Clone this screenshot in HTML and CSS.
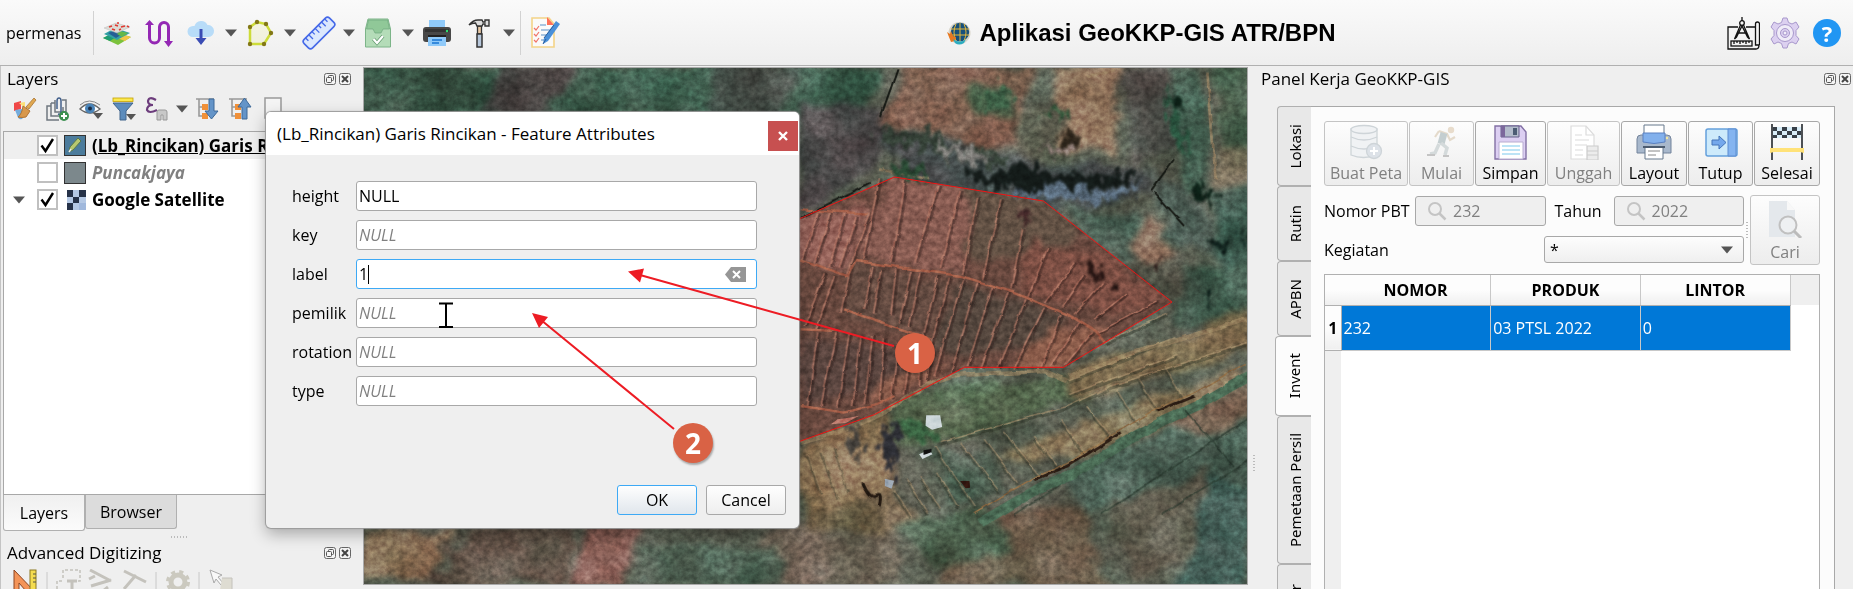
FILE: index.html
```html
<!DOCTYPE html>
<html lang="id">
<head>
<meta charset="utf-8">
<title>Aplikasi GeoKKP-GIS ATR/BPN</title>
<link rel="stylesheet" href="styles.css">
</head>
<body>
<svg class="defs" aria-hidden="true">
  <symbol id="restore" viewBox="0 0 12 12"><rect x=".5" y=".5" width="11" height="11" rx="2" fill="#f4f4f4" stroke="#666"/><rect x="4.500" y="2.500" width="5" height="5" rx="1" fill="none" stroke="#555"/><rect x="2.500" y="4.500" width="5" height="5" rx="1" fill="#f4f4f4" stroke="#555"/></symbol>
  <symbol id="closebox" viewBox="0 0 12 12"><rect x=".5" y=".5" width="11" height="11" rx="2" fill="#f4f4f4" stroke="#666"/><path d="M3 3l6 6M9 3l-6 6" stroke="#444" stroke-width="2"/></symbol>
  <symbol id="caret" viewBox="0 0 12 8"><path d="M0 0.500h12L6 7.500z" fill="#555"/></symbol>
  <symbol id="lens" viewBox="0 0 20 20"><circle cx="8" cy="8" r="6" fill="none" stroke="#c4c4c4" stroke-width="2"/><path d="M12.500 12.500l6 6" stroke="#c4c4c4" stroke-width="2.500"/></symbol>
</svg>

<header class="topbar">
  <span class="user">permenas</span>
  <div class="sep"></div>
  <nav class="tools">
    <button class="tool" aria-label="Layer"><svg width="30" height="24" viewBox="0 0 30 24"><path d="M1 17l12-6 16 5-13 8z" fill="#7cc23c"/><path d="M1 17l12-6 5 2-10 7z" fill="#1e9c74"/><path d="M19 13l10 3-6 4-8-3z" fill="#f0c648"/><path d="M2 13l11-6 15 5-13 7z" fill="#32a0a4"/><path d="M6 12l8-3 8 3-8 5z" fill="#245f96"/><path d="M18 10l8 2-6 4-5-3z" fill="#64b848"/><path d="M2 7l12-5 14 4-13 6z" fill="#dcdcd6" stroke="#bbb" stroke-width=".5"/><path d="M7 6l3-1M13 4l3 1M19 6l4-1M10 8l3 1M17 9l2-1M15 2l2 0M25 5l2 1" stroke="#e03a32" stroke-width="1.600"/></svg></button>
    <button class="tool" aria-label="Jalur"><svg width="28" height="28" viewBox="0 0 28 28"><path d="M4.500 3v16a5 5 0 0 0 10 0V8a4.500 4.500 0 0 1 9 0v16" fill="none" stroke="#9428b4" stroke-width="3"/><path d="M0 6l4.500-5L9 6zM19 22h9l-4.500 6z" fill="#9428b4"/></svg></button>
    <button class="tool" aria-label="Unduh"><svg width="28" height="26" viewBox="0 0 28 26"><path d="M6 17a5.500 5.500 0 0 1 0-11h1.500a7 7 0 0 1 13-1 6 6 0 0 1 1 12z" fill="#b8dcf8"/><path d="M12.500 9h3v9h4l-5.500 7-5.500-7h4z" fill="#3a4cb4"/></svg></button>
    <button class="drop" aria-label="Menu unduh"><svg width="12" height="8"><use href="#caret"/></svg></button>
    <button class="tool" aria-label="Poligon"><svg width="27" height="28" viewBox="0 0 27 28"><path d="M3 25V8l7-5 9 2 5 9-7 11z" fill="#eeeeb0" fill-opacity=".3" stroke="#cddc39" stroke-width="2.500"/><g fill="#827717"><circle cx="3" cy="25" r="2.200"/><circle cx="3" cy="8" r="2.200"/><circle cx="10" cy="3" r="2.200"/><circle cx="19" cy="5" r="2.200"/><circle cx="24" cy="14" r="2.200"/><circle cx="17" cy="25" r="2.200"/></g></svg></button>
    <button class="drop" aria-label="Menu poligon"><svg width="12" height="8"><use href="#caret"/></svg></button>
    <button class="tool" aria-label="Ukur"><svg width="34" height="34" viewBox="0 0 34 34"><g transform="rotate(-45 17 17)"><rect x="-1" y="11" width="36" height="12" rx="3" fill="#dce8fd" stroke="#4468e8" stroke-width="1.600"/><path d="M4 11v4M8.500 11v6M13 11v4M17.500 11v6M22 11v4M26.500 11v6M31 11v4" stroke="#4468e8" stroke-width="1.300"/></g></svg></button>
    <button class="drop" aria-label="Menu ukur"><svg width="12" height="8"><use href="#caret"/></svg></button>
    <button class="tool" aria-label="Validasi"><svg width="26" height="30" viewBox="0 0 26 30"><path d="M3 1h20l2.500 10v18H.5V11z" fill="#b4dcb8" stroke="#7cb488"/><path d="M3.500 2h19l2 9H18l-2 4h-6l-2-4H1.500z" fill="#90c898" stroke="#6ea87c" stroke-width=".7"/><path d="M8.500 21l3.500 4 6-7" fill="none" stroke="#5c9468" stroke-width="3.500"/><path d="M8.500 21l3.500 4 6-7" fill="none" stroke="#fff" stroke-width="2.300"/></svg></button>
    <button class="drop" aria-label="Menu validasi"><svg width="12" height="8"><use href="#caret"/></svg></button>
    <button class="tool" aria-label="Cetak"><svg width="28" height="28" viewBox="0 0 28 28"><path d="M6 1h16v10H6z" fill="#90caf9"/><rect x="0" y="8" width="28" height="15" rx="3" fill="#484848"/><path d="M2 10h24v3H2z" fill="#333"/><circle cx="24" cy="12" r="1.200" fill="#30e070"/><path d="M5 16h18v11H5z" fill="#90caf9"/><path d="M5 16h18v2H5z" fill="#222"/><path d="M9 21h10M9 24h7" stroke="#1976d2" stroke-width="1.500"/></svg></button>
    <button class="tool" aria-label="Alat"><svg width="22" height="30" viewBox="0 0 22 30"><path d="M9.500 8h4v8h-4z" fill="#e8c8a4" stroke="#333" stroke-width="1.300"/><path d="M9 16h5v13H9z" fill="#b8c8dc" stroke="#333" stroke-width="1.500"/><path d="M1 7q4-5 9-5h4l1 2h2V2h4v6h-4V6h-2l-1 2H9L7.500 5Q4 5 1 7z" fill="#ddd" stroke="#333" stroke-width="1.400"/></svg></button>
    <button class="drop" aria-label="Menu alat"><svg width="12" height="8"><use href="#caret"/></svg></button>
    <div class="sep inner"></div>
    <button class="tool" aria-label="Formulir"><svg width="30" height="32" viewBox="0 0 30 32"><path d="M1 1h17l5 6v23H1z" fill="#fafafa" stroke="#f4d488" stroke-width="1.600"/><path d="M16 0l7 8h-7z" fill="#ff7058"/><path d="M3 11l2 2 3-4M3 17l2 2 3-4M3 23l2 2 3-4" fill="none" stroke="#f07468" stroke-width="1.200"/><path d="M9 8h6M10 13h9M10 18h6M10 23h4" stroke="#90b4d8" stroke-width="1.500"/><path d="M25 4l4 3-12 17-5 3 1-6z" fill="#4a90d9"/><path d="M13 21l10-13M12 27l3-5" stroke="#2c5f9c"/></svg></button>
  </nav>
  <h1 class="brand">
    <svg width="24" height="24" viewBox="0 0 24 24"><circle cx="12.500" cy="12" r="11" fill="#d8d4c8"/><circle cx="13" cy="11" r="9.200" fill="#17507c"/><path d="M4 8h18M4 14h18M13 2v18M9 3q-4 8 0 17M17 3q4 8 0 17" fill="none" stroke="#e8b838"/><path d="M0 11l3 2 1-3 2 5 3 1-1 4-4 1z" fill="#e87820"/><path d="M6 18q7 5 13 0l-2 4q-5 3-9 0z" fill="#2cacc0"/></svg>
    <span>Aplikasi GeoKKP-GIS ATR/BPN</span>
  </h1>
  <div class="tools right">
    <button class="tool" aria-label="Gambar"><svg width="33" height="34" viewBox="0 0 33 34" fill="none" stroke="#111" stroke-width="1.300"><path d="M11 11H1v22h28q3 0 3-4H28.500V8q0-2 2-2t2 2v21M19 11h9.500"/><rect x="4" y="25" width="21" height="5"/><path d="M7 25v3M10 25v2M13 25v3M16 25v2M19 25v3M22 25v2M15 1v4"/><circle cx="15" cy="7" r="2.300"/><path d="M13.500 9L7.500 23l2-2 5.500-11 5.500 11 2 2-6-14M11.500 17h7"/></svg></button>
    <button class="tool" aria-label="Pengaturan"><svg width="30" height="32" viewBox="0 0 30 32"><path d="M13 1h4l1.500 4.500 3.500 1.500 4-2 3 5-3 3.500v5l3 3.500-3 5-4-2-3.500 1.500L17 31h-4l-1.500-4.500L8 25l-4 2-3-5 3-3.500v-5L1 10l3-5 4 2 3.500-1.500z" fill="#dcd0f0" stroke="#a898cc"/><circle cx="15" cy="16" r="8.500" fill="#f0ecf8" stroke="#a898cc"/><circle cx="15" cy="16" r="4.500" fill="#dcd0f0" stroke="#a898cc"/><circle cx="15" cy="16" r="2" fill="#f4f0fa" stroke="#a898cc"/></svg></button>
    <button class="tool help" aria-label="Bantuan"><span>?</span></button>
  </div>
</header>

<main class="work">
  <aside class="left">
    <div class="dockhead"><h2>Layers</h2><span class="dockbtns"><svg width="12" height="12"><use href="#restore"/></svg><svg width="12" height="12"><use href="#closebox"/></svg></span></div>
    <div class="layerbar">
      <button class="ltool" aria-label="Gaya"><svg width="24" height="24" viewBox="0 0 24 24"><path d="M1 6l7-2v8l-7 2z" fill="#f04848"/><path d="M6 6l6-1v6z" fill="#fce078"/><path d="M2 13l7-1 5 4-5 6q-4 1-5-4z" fill="#74acdc"/><path d="M21 1l2 2-7 9-3-2z" fill="#e0a850" stroke="#a87434" stroke-width=".8"/><path d="M10 9l7 5-4 6q-4 1-8 0 4-3 5-11z" fill="#d8984c" stroke="#b07434"/></svg></button>
      <button class="ltool" aria-label="Tambah grup"><svg width="24" height="24" viewBox="0 0 24 24" fill="none" stroke="#707880" stroke-width="1.500"><path d="M5 9H1v14h12M5 6h4M5 6v13h12V10M9 3v12h11V3h-4"/><path d="M11 12V4q0-3 2-3t2 3v10q0 4-3 3" stroke="#44618c"/><circle cx="18" cy="19" r="5" fill="#3c9050" stroke="none"/><path d="M18 16v6M15 19h6" stroke="#fff" stroke-width="2"/></svg></button>
      <button class="ltool" aria-label="Tampilan"><svg width="26" height="24" viewBox="0 0 26 24"><path d="M2 12Q11 2 22 12 12 20 2 12z" fill="#fff" stroke="#666" stroke-width="1.400"/><path d="M2 8Q11 0 22 8" fill="none" stroke="#888"/><circle cx="12" cy="11.500" r="5" fill="#4a84b8"/><circle cx="12" cy="11.500" r="2" fill="#1c2c44"/><path d="M15 16h10l-5 6z" fill="#555"/></svg></button>
      <button class="ltool" aria-label="Filter"><svg width="24" height="24" viewBox="0 0 24 24"><path d="M1 6h20l-7 8v9H8v-9z" fill="#5c8cbc" stroke="#40648c"/><rect x="1" y="1" width="20" height="3.500" fill="#fce94f" stroke="#c4a000" stroke-width=".8"/><path d="M14 17h10l-5 6z" fill="#555"/></svg></button>
      <button class="ltool" aria-label="Ekspresi"><svg width="24" height="24" viewBox="0 0 24 24" fill="none"><path d="M11 3Q4-1 3 4q0 4 5 4-6 0-6 5 2 4 10 0" stroke="#6c3c7c" stroke-width="2.200"/><path d="M12 23v-8q0-2 2-2h6q2 0 2 2v8h-4v-5h-2v5z" fill="#c8c8c8" stroke="#999"/></svg></button>
      <button class="drop" aria-label="Menu ekspresi"><svg width="12" height="8"><use href="#caret"/></svg></button>
      <button class="ltool" aria-label="Buka semua"><svg width="24" height="24" viewBox="0 0 24 24"><path d="M1 2h18M4 2v17h5M4 10h5" fill="none" stroke="#999" stroke-width="1.600"/><path d="M7 7h6v6H7zM7 16h6v6H7z" fill="#f09038"/><path d="M14 2h5v12h4l-6.500 8L10 14h4z" fill="#6494c8" stroke="#3c6898"/></svg></button>
      <button class="ltool" aria-label="Tutup semua"><svg width="24" height="24" viewBox="0 0 24 24"><path d="M1 2h18M4 2v17h5M4 10h5" fill="none" stroke="#999" stroke-width="1.600"/><path d="M7 7h6v6H7zM7 16h6v6H7z" fill="#f09038"/><path d="M14 22h5V10h4L16.500 1 10 10h4z" fill="#6494c8" stroke="#3c6898"/></svg></button>
      <button class="ltool" aria-label="Hapus"><svg width="18" height="24" viewBox="0 0 18 24"><rect x="1" y="1" width="16" height="20" fill="#f4f4f4" stroke="#999" stroke-width="1.500"/></svg></button>
    </div>
    <ul class="tree">
      <li class="layer current"><label><input type="checkbox" checked><svg width="22" height="21" viewBox="0 0 22 21"><rect x=".5" y=".5" width="21" height="20" fill="#4c7c9c" stroke="#333"/><path d="M5 17l1-5 8-9 3 3-8 9z" fill="#b8c870" stroke="#587848"/><path d="M5 17l2-3" stroke="#eee" stroke-width="1.500"/></svg><b class="under">(Lb_Rincikan) Garis R</b></label></li>
      <li class="layer"><label><input type="checkbox"><svg width="22" height="22"><rect x=".5" y=".5" width="21" height="21" fill="#7c888c" stroke="#333"/></svg><b class="off">Puncakjaya</b></label></li>
      <li class="layer"><svg class="expand" width="12" height="8"><use href="#caret"/></svg><label><input type="checkbox" checked><svg width="22" height="20" viewBox="0 0 22 20"><path d="M3 0h19v20H3z" fill="#b4c8e4"/><path d="M3 0h6v7H3zM15 0h7v7h-7zM9 7h6v6H9zM3 13h6v7H3z" fill="#263248"/><path d="M15 13h7v7h-7z" fill="#a0b8dc"/></svg><b>Google Satellite</b></label></li>
    </ul>
    <div class="docktabs"><button class="dtab on">Layers</button><button class="dtab">Browser</button></div>
    <div class="hgrip"></div>
    <div class="dockhead"><h2>Advanced Digitizing</h2><span class="dockbtns"><svg width="12" height="12"><use href="#restore"/></svg><svg width="12" height="12"><use href="#closebox"/></svg></span></div>
    <svg class="digit" width="300" height="20"><path d="M1 1l22 23H1z" fill="#f49458" stroke="#8c4420"/><path d="M6 14l7 8H6z" fill="#efefef" stroke="#8c4420"/><rect x="17" y="1" width="6" height="24" fill="#f4dc50" stroke="#8c7820"/><path d="M20 5h3M20 9h3M20 13h3" stroke="#554"/><path d="M34 3v22M143 3v22M186 3v22" stroke="#c8c8c8"/><g fill="none" stroke="#c4c2bc" stroke-width="1.500"><path d="M50 9V1h17v11h-8M44 20v-8h6" stroke-dasharray="3 2"/><path d="M54 12h10M59 12v12" stroke-width="3"/><path d="M77 1l21 11M78 17l20-6M76 10l6-3M90 22l5-4M111 2l22 11M111 20l12-14" stroke-width="3"/></g><circle cx="165" cy="13" r="7" fill="none" stroke="#cbc9bf" stroke-width="5"/><circle cx="165" cy="13" r="10" fill="none" stroke="#cbc9bf" stroke-width="4" stroke-dasharray="4 4"/><path d="M197 1l12 5-4 2 5 6-2 2-5-6-2 4z" fill="#f8f8f8" stroke="#aaa"/><path d="M209 9h10v12h-12" fill="#dedcd2" stroke="#c4c2bc"/></svg>
  </aside>

  <section class="map" aria-label="Peta">
    <svg class="sat" viewBox="5 8 1540 1548" preserveAspectRatio="none">
      <defs>
        <filter id="b1" x="-10%" y="-10%" width="120%" height="120%" color-interpolation-filters="sRGB"><feTurbulence type="fractalNoise" baseFrequency=".012 .007" numOctaves="4" seed="4" result="n"/><feDisplacementMap in="SourceGraphic" in2="n" scale="80" xChannelSelector="R" yChannelSelector="G" result="d"/><feGaussianBlur in="d" stdDeviation="6 10"/></filter>
        <filter id="b2" x="-10%" y="-10%" width="120%" height="120%" color-interpolation-filters="sRGB"><feTurbulence type="fractalNoise" baseFrequency=".04 .024" numOctaves="4" seed="4" result="n"/><feDisplacementMap in="SourceGraphic" in2="n" scale="90" xChannelSelector="R" yChannelSelector="G" result="d"/><feGaussianBlur in="d" stdDeviation="3 5"/></filter>
        <filter id="rough" x="-5%" y="-5%" width="110%" height="110%" color-interpolation-filters="sRGB"><feTurbulence type="fractalNoise" baseFrequency=".015 .015" numOctaves="3" seed="8" result="n"/><feDisplacementMap in="SourceGraphic" in2="n" scale="14" xChannelSelector="R" yChannelSelector="G" result="d"/><feGaussianBlur in="d" stdDeviation="1"/></filter>
        <filter id="grain" x="0" y="0" width="100%" height="100%" color-interpolation-filters="sRGB"><feTurbulence type="fractalNoise" baseFrequency=".09 .055" numOctaves="4" seed="11"/><feColorMatrix values="1.200 0 0 0 -.1 1.200 0 0 0 -.1 1.200 0 0 0 -.1 0 0 0 0 1"/></filter>
        <filter id="cloud" x="0" y="0" width="100%" height="100%" color-interpolation-filters="sRGB"><feTurbulence type="fractalNoise" baseFrequency=".011 .007" numOctaves="5" seed="23"/><feColorMatrix values="1.600 .4 0 0 -.5 1.600 -.1 0 0 -.25 1.600 0 0 0 -.3 0 0 0 0 1"/></filter>
        <clipPath id="lot"><path d="M600 580L765 460 930 335l260 72 224 303-189 196h-173L895 1048l-130 80-165 100z"/></clipPath>
        <path id="strips" d="M235 340L185 580M310 345L270 590M410 360L345 590M475 375L415 610M530 395L485 625M600 400L545 640M665 490L630 670M740 545L680 695M820 590L735 710M850 625L785 725M905 650L820 745M975 685L880 760M1070 705L890 800M70 625L10 780M100 630L45 790M150 600L120 740M215 600L190 730M240 610L215 740M285 610L270 745M330 615L295 770M360 620L325 780M410 630L370 800M445 635L395 820M485 640L400 930M530 650L450 920M575 660L500 900M625 680L540 905M675 700L590 905M730 725L640 905M780 745L720 905M835 770L750 900M875 800L790 900M50 800L20 1020M105 800L60 1020M145 800L110 1025M180 810L155 1020M215 810L190 1015M250 820L235 1010M290 850L270 1000M330 850L310 985M365 800L355 960M395 820L375 950M50 440L5 580M90 440L40 590M130 440L85 600M165 450L115 605M205 440L135 630"/>
        <path id="plots" d="M480 1130L590 1270M550 1120L650 1250M610 1100L720 1230M700 1110L770 1200M780 1060L850 1160M860 1020L930 1110M950 970L1010 1070M1010 930L1070 1030M1090 900L1150 1000M20 1160L60 1280M60 1150L110 1290M100 1140L140 1270M280 1270L330 1350M320 1240L380 1340M360 1230L420 1330M410 1220L470 1320M400 1140L520 1320M805 940L1120 815M805 985L1130 865M915 830L1100 740M420 1130L800 1020 930 960 1340 830"/>
      </defs>
      <rect x="5" y="8" width="1540" height="1548" fill="#5a5f52"/>
      <g filter="url(#b1)">
        <path d="M0 0h900l-60 180H0z" fill="#3a5747"/><path d="M240 0h140l-60 150H200z" fill="#4a4644"/><path d="M620 0h160l-60 160h-100z" fill="#434e47"/><path d="M780 120h130v120l-30 100-120 110z" fill="#4d4a4a"/>
        <path d="M950 0h220l-20 220-100 20-150-60z" fill="#7c5c4c"/><path d="M1070 60h70v90h-70z" fill="#4b5f48"/><path d="M1150 130l110 0-30 170-120-20z" fill="#5c5f50"/><path d="M1210 10h130l-30 270-80-30z" fill="#967a62"/><path d="M1340 0h60l30 260-90 40z" fill="#504f4a"/><path d="M1400 0h60l30 420-50-60z" fill="#435f50"/><path d="M1490 0h80v260h-70z" fill="#4a604d"/><path d="M1490 260h80v100h-70z" fill="#78735d"/><path d="M1480 360h80v300h-60z" fill="#3f5c50"/>
        <path d="M900 200l260 80 200 30 40 70-200 60-240-90z" fill="#454c4c"/><path d="M1200 410l150 40 20 100-30 70z" fill="#4f6458"/><path d="M1330 530l45-80 60 110-50 40z" fill="#8a6a58"/><path d="M1360 290l80 60 60 220-90-60z" fill="#505d55"/>
        <path d="M1420 600h140v130l-140 50z" fill="#445c4e"/><path d="M940 990l290-60 60 60-250 130-110 20z" fill="#56694f"/><path d="M765 1130l160-80v270l-160 90z" fill="#8f7658"/>
        <path d="M1230 930l320-200v130l-320 150z" fill="#837355"/><path d="M1100 1180l260-170 150-90 20 50-250 200z" fill="#877658"/><path d="M980 1150h110l40 140-100 30z" fill="#4d5e50"/><path d="M920 1280l80 100-220 60v-80z" fill="#78674f"/><path d="M1220 1230l330-260v300l-300 80z" fill="#4f6458"/><path d="M1400 1070l150-100v90l-100 60z" fill="#786352"/>
        <path d="M1050 1380l200-60 60 240h-300z" fill="#6a5b49"/><path d="M1300 1320l180-100 20 200-160 140z" fill="#5f5c4e"/><path d="M1480 1250h80v320h-140z" fill="#405d55"/><path d="M940 1380l140-40 40 100-120 80z" fill="#4b604c"/><path d="M700 1400h240v160H680z" fill="#6d6355"/><path d="M5 1390h170l-50 160H5z" fill="#8e745a"/><path d="M180 1390h200l-30 170H130z" fill="#5f5045"/><path d="M400 1380h80l-50 180h-70z" fill="#865c53"/><path d="M480 1440h260v120H450z" fill="#4a5b4d"/>
      </g>
      <rect x="5" y="8" width="1540" height="1548" filter="url(#cloud)" class="soft"/>
      <g clip-path="url(#lot)">
        <path d="M600 300h900v900H600z" fill="#69493f"/>
        <g filter="url(#b1)">
          <path d="M920 310l150 40-20 270-180-40z" fill="#885c52"/><path d="M740 430l150 0-30 210-110-50z" fill="#96635a"/><path d="M1060 370l130 17 60 110-60 100-130-20z" fill="#625144"/><path d="M1150 510l140 60 130 130-60 50-200-70z" fill="#7b4e43"/>
          <path d="M860 600l180 40-40 170-160-60z" fill="#654c42"/><path d="M1040 650l180 90-60 120h-160z" fill="#55473e"/><path d="M765 820l230 40-20 80-210 70z" fill="#5a453f"/><path d="M1180 780l110 20-70 120h-80z" fill="#8c5d4b"/><path d="M900 960l120-60-90 110-80 20z" fill="#8a5c4b"/>
        </g>
      </g>
      <g transform="translate(767 2) scale(.581 1)" fill="none">
        <g filter="url(#rough)">
          <use href="#strips" x="7" stroke="#2c1a18" stroke-width="8" opacity=".45"/><use href="#strips" stroke="#c07e69" stroke-width="4" opacity=".75"/>
          <path d="M0 580L140 630 165 585 480 630 640 680 800 745 885 795 915 830M0 1020l130 20 90-20 60-30M0 430l70 5 130 8M130 730l260 90M0 790l110 5" stroke="#a55f49" stroke-width="7"/>
          <use href="#plots" y="8" stroke="#2e3327" stroke-width="8" opacity=".42"/><use href="#plots" stroke="#b39872" stroke-width="4" opacity=".55"/>
          <path d="M0 1130q200-50 310-130t200-75l220-10 70 30M805 930L1000 860 1340 760" stroke="#a48a66" stroke-width="14" opacity=".6"/>
          <path d="M520 1345L700 1240 800 1200 960 1100 1070 1040 1180 990 1335 900" stroke="#4a6a54" stroke-width="30" transform="translate(20 24)"/>
          <path d="M700 1242L800 1200 960 1102M1070 1036L1180 990" stroke="#2c1d14" stroke-width="8"/><path d="M520 1340L700 1235 800 1192 960 1092 1070 1028 1180 980 1335 892" stroke="#8c6a44" stroke-width="4"/>
          <path d="M1220 20l25 320M860 30l80-15M235 310l150 30" stroke="#9c8464" stroke-width="8" opacity=".7"/><path d="M1050 375l70-95M1060 380l90 100M210 350L0 455M240 150l50-140" stroke="#171a15" stroke-width="6"/>
          <path d="M185 1250q20 50 40 40t10 30" stroke="#241a12" stroke-width="9"/><path d="M900 1345L1340 1060M1080 1345l260-160M640 1345l140-90M1150 1030l150 170" stroke="#25332a" stroke-width="5" opacity=".6"/>
        </g>
        <g filter="url(#b2)">
          <path d="M230 190l160 10 90 35 110 25 30 40-150-15-150-50-90-10z" fill="#333f35"/><path d="M250 290l120 20 20 30-140-20z" fill="#2a4a34"/>
          <path d="M510 310l60 10 90-30 100 30 90 10 120-10 40 20-70 20-110 20-60 15-100-20-90-5-80-30z" fill="#141b19"/><path d="M780 200l70 10-30 50-30-20z" fill="#2c241a"/>
          <path d="M400 230l100 10 80 40-70 10-90-30z" fill="#82807c"/><path d="M640 370l60 10 80-20 110 15 140-25-50 40-110 25-100-20-110 5z" fill="#5d7082"/><path d="M720 240l110 10-40 30z" fill="#98857f"/>
          <path d="M1110 90l40 10-10 40-30-10zM1100 170l50 0-20 40zM1180 350l50 30 10 40-60-30z" fill="#0c1f16"/><path d="M1090 60l50 120 30 100-60-80z" fill="#29533e"/>
          <path d="M850 590l50 10 10 40-40 10zM925 635l40 20-20 30zM1060 585l30-5-30 40z" fill="#231311"/><path d="M640 430l60 0-30 40z" fill="#45292a"/><path d="M1240 520h50v30h-40zM1310 500h40v40zM1200 680h30v40z" fill="#0c1c18"/>
          <path d="M240 1080h60l-10 60-20 120-25-90z" fill="#2d2e34"/><path d="M130 1070l50 0 0 90-30 20z" fill="#45413c"/><path d="M290 1060l90 10 30 60-80-10z" fill="#3a6342"/><path d="M540 90l70-40 30 60-60 30z" fill="#3b5d44"/><path d="M730 130l70 0-20 40z" fill="#31563a"/>
        </g>
        <path d="M376 1048h42l6 35-30 8-20-12zM355 1165l30-14 10 14-30 14z" fill="#ccd6d9"/><path d="M252 1238l28 6-8 24-20-8z" fill="#9ea9b5"/><path d="M368 1153l24-4v10l-24 8z" fill="#111"/><path d="M478 1245l28 0 2 20-14 2z" fill="#32160f"/><path d="M90 1075l20-15 35-5 30-6-40 22z" fill="#c07f70"/>
      </g>
      <rect x="5" y="8" width="1540" height="1548" filter="url(#grain)" class="over"/>
      <path d="M600 580L765 460 930 335l260 72 224 303-189 196h-173L895 1048l-130 80-165 100z" fill="none" stroke="#f21414" vector-effect="non-scaling-stroke"/>
    </svg>
  </section>

  <aside class="right">
    <div class="dockhead"><h2>Panel Kerja GeoKKP-GIS</h2><span class="dockbtns"><svg width="12" height="12"><use href="#restore"/></svg><svg width="12" height="12"><use href="#closebox"/></svg></span></div>
    <div class="vgrip"></div>
    <div class="tabbed">
      <div class="vtabs">
        <button class="vtab t1"><span>Lokasi</span></button>
        <button class="vtab t2"><span>Rutin</span></button>
        <button class="vtab t2"><span>APBN</span></button>
        <button class="vtab t1 on"><span>Invent</span></button>
        <button class="vtab t3"><span>Pemetaan Persil</span></button>
        <button class="vtab t4"><span>r</span></button>
      </div>
      <div class="pane">
        <div class="actions">
          <button class="act" disabled><svg width="34" height="36" viewBox="0 0 34 36" fill="#f0f2f4" stroke="#ced4d8" stroke-width="1.300"><path d="M2 5v26q12 5 26 0V5z"/><ellipse cx="15" cy="5.500" rx="13" ry="4"/><path d="M2 13q13 6 26 0M2 22q13 6 26 0" fill="none"/><circle cx="25" cy="27" r="7.500" fill="#dde2e8"/><path d="M25 23v8M21 27h8" stroke="#fff" stroke-width="2"/></svg>Buat Peta</button>
          <button class="act" disabled><svg width="34" height="36" viewBox="0 0 34 36" fill="none"><circle cx="26" cy="6" r="3.200" fill="#e8dccc"/><path d="M14 7l8 3 3 6 5-3M14 7l-4 6" stroke="#e4dacb" stroke-width="2.200"/><path d="M19 9l-3 11" stroke="#c4ced0" stroke-width="7"/><path d="M16 19l6 5-2 7M14 20l-4 9-5 1" stroke="#d4dadb" stroke-width="3.500"/><path d="M2 31h8M18 32h6" stroke="#c4c4c4" stroke-width="2"/></svg>Mulai</button>
          <button class="act"><svg width="34" height="36" viewBox="0 0 34 36"><path d="M1 2h26l5 6v27H1z" fill="#dccff2" stroke="#8270a4" stroke-width="1.400"/><path d="M7 2h18v11H7z" fill="#b4bccc" stroke="#66608c"/><path d="M7 2h4v11H7z" fill="#7c689c"/><path d="M19 4h4v7h-4z" fill="#4c5c74"/><path d="M5 18h24v17H5z" fill="#fff" stroke="#b8acd0"/><path d="M8 22h18M8 26h18M8 30h18" stroke="#a8dcf4" stroke-width="1.500"/></svg>Simpan</button>
          <button class="act" disabled><svg width="34" height="36" viewBox="0 0 34 36" fill="#fff" stroke="#dcdcdc" stroke-width="1.200"><path d="M4 2h15l8 9v24H4z"/><path d="M19 2v9h8M8 11h7M8 16h14M8 21h12M8 26h8M8 31h8" fill="none"/><path d="M20 22h11v14H20zM20 27h11M20 31h11" fill="#ececec" stroke="#ccc"/></svg>Unggah</button>
          <button class="act"><svg width="36" height="36" viewBox="0 0 36 36"><path d="M8 1h20v10H8z" fill="#fff" stroke="#66788c"/><path d="M5 11h26q4 0 4 4v14H1V15q0-4 4-4z" fill="#a8b8cc" stroke="#73839b"/><path d="M7 9h22v9q-11 3-22 0z" fill="#82b0ec" stroke="#5a80c0"/><path d="M9 23h18v12H9z" fill="#fff" stroke="#66788c"/><path d="M7 23h22" stroke="#4c5c70" stroke-width="2"/><path d="M12 27h12M12 31h8" stroke="#888"/><circle cx="31" cy="14" r="1.200" fill="#f4e8a0"/></svg>Layout</button>
          <button class="act"><svg width="34" height="36" viewBox="0 0 34 36"><rect x="2" y="5" width="31" height="27" rx="2" fill="#cdeafb" stroke="#64a0dc" stroke-width="1.500"/><path d="M24 5h8v27h-8z" fill="#84b4f0" stroke="#5c8cd0"/><path d="M8 16h7v-4l7 6.500-7 6.500v-4H8z" fill="#74a8ec" stroke="#4474b8"/></svg>Tutup</button>
          <button class="act"><svg width="34" height="36" viewBox="0 0 34 36"><path d="M2 3h30v11H2z" fill="#d8edf8"/><path d="M2 3h5v4H2zM12 3h5v4h-5zM22 3h5v4h-5zM7 7h5v4H7zM17 7h5v4h-5zM27 7h5v4h-5zM2 11h5v3H2zM12 11h5v3h-5zM22 11h5v3h-5z" fill="#384048"/><path d="M2 0v36M32 0v36" stroke="#4c5054" stroke-width="2"/><path d="M0 24h34v5l-4-1H4l-4 1z" fill="#ffe278"/></svg>Selesai</button>
        </div>
        <div class="search">
          <div class="fields">
            <label for="pbt">Nomor PBT</label>
            <span class="lensbox"><svg width="20" height="20"><use href="#lens"/></svg><input id="pbt" value="232" disabled></span>
            <label for="tahun" class="mid">Tahun</label>
            <span class="lensbox"><svg width="20" height="20"><use href="#lens"/></svg><input id="tahun" value="2022" disabled></span>
            <label for="keg" class="keg">Kegiatan</label>
            <span class="combo"><select id="keg"><option>*</option></select><svg width="12" height="8"><use href="#caret"/></svg></span>
          </div>
          <div class="vdots"></div>
          <button class="act cari" disabled><svg width="36" height="38" viewBox="0 0 36 38"><path d="M2 1h18l8 9v27H2z" fill="#e4e8ec"/><path d="M20 1v9h8z" fill="#f8f8f8"/><circle cx="21" cy="25" r="8.500" fill="#eef0f2" stroke="#c0c0c0" stroke-width="2"/><path d="M27 31l7 7" stroke="#bbb" stroke-width="3"/></svg>Cari</button>
        </div>
        <div class="gridview">
          <table>
            <thead><tr><th class="num"></th><th>NOMOR</th><th>PRODUK</th><th>LINTOR</th><th class="rest"></th></tr></thead>
            <tbody><tr><th class="num">1</th><td>232</td><td>03 PTSL 2022</td><td>0</td><td class="rest"></td></tr></tbody>
          </table>
          <div class="gutter"></div>
        </div>
      </div>
    </div>
  </aside>
</main>

<form class="dialog">
  <div class="dtitle"><h2>(Lb_Rincikan) Garis Rincikan - Feature Attributes</h2><button type="button" class="close" aria-label="Tutup dialog"><svg width="10" height="10"><path d="M1 1l8 8M9 1l-8 8" stroke="#fff" stroke-width="2.400"/></svg></button></div>
  <div class="attrs">
    <label for="f1">height</label><input id="f1" value="NULL">
    <label for="f2">key</label><input id="f2" placeholder="NULL">
    <label for="f3">label</label><span class="clearable"><input id="f3" class="focus" value="1"><i class="textcaret"></i><svg width="21" height="15" viewBox="0 0 21 15"><path d="M6 0h15v15H6L0 7.500z" fill="#969696"/><path d="M8 4l7 7M15 4l-7 7" stroke="#fff" stroke-width="2"/></svg></span>
    <label for="f4">pemilik</label><input id="f4" placeholder="NULL">
    <label for="f5">rotation</label><input id="f5" placeholder="NULL">
    <label for="f6">type</label><input id="f6" placeholder="NULL">
  </div>
  <div class="dbtns"><button type="button" class="ok">OK</button><button type="button">Cancel</button></div>
</form>

<div class="notes">
  <svg width="940" height="589" viewBox="0 0 940 589"><g stroke="#ed1c24" stroke-width="2" fill="#ed1c24"><path d="M640 275L894 346M541 320l133 109"/><path stroke="none" d="M628 271.500l16-3-4 14zM532 313l16 4-9 11z"/></g><path d="M439 303.500h14M439 327h14M446 303v24" stroke="#000" stroke-width="2"/></svg>
  <span class="badge one">1</span>
  <span class="badge two">2</span>
</div>
</body>
</html>
```
FILE: styles.css
```css
* { box-sizing: border-box; }
html, body { height: 100%; }
body {
  margin: 0;
  display: flex;
  flex-direction: column;
  overflow: hidden;
  position: relative;
  background: #efefef;
  color: #000;
  font: 16px/22px "Open Sans", "Noto Sans", sans-serif;
}
button, input, select { font: inherit; color: inherit; margin: 0; }
button { padding: 0; border: 0; background: none; }
h1, h2 { margin: 0; font-weight: 400; }
h2 { font-size: 17px; white-space: nowrap; }
svg { display: block; flex: none; }
.defs { position: absolute; width: 0; height: 0; }

/* top bar */
.topbar {
  flex: none;
  height: 66px;
  display: flex;
  align-items: center;
  background: linear-gradient(#fafafa, #eeeeee);
  border-bottom: 1px solid #b0b0b0;
}
.user { width: 87px; padding-left: 6px; }
.sep { width: 1px; height: 44px; margin: 0 2px 0 6px; background: #d2d2d2; }
.sep.inner { margin: 0 4px 0 3px; }
.tools { display: flex; align-items: center; }
.tool { width: 42px; height: 40px; display: flex; align-items: center; justify-content: center; }
.drop { width: 17px; height: 24px; display: flex; align-items: center; justify-content: center; }
.brand {
  flex: 1;
  display: flex;
  align-items: center;
  justify-content: center;
  gap: 8px;
  padding-right: 6px;
  font: bold 24px/28px "Liberation Sans", Arial, sans-serif;
}
.tools.right { padding-right: 5px; }
.help span {
  width: 28px;
  height: 28px;
  border-radius: 50%;
  background: #2196f3;
  color: #fff;
  font: bold 22px/28px "Open Sans", sans-serif;
}

/* docks */
.work { flex: 1; min-height: 0; display: flex; }
.left { width: 363px; flex: none; display: flex; flex-direction: column; border-left: 1px solid #c4c4c4; padding-left: 2px; }
.dockhead { flex: none; height: 26px; display: flex; align-items: center; justify-content: space-between; padding: 0 12px 0 4px; }
.dockbtns { display: flex; gap: 3px; }
.layerbar { flex: none; display: flex; align-items: center; height: 34px; padding-left: 5px; margin-bottom: 5px; }
.ltool { width: 33px; height: 26px; display: flex; align-items: center; justify-content: center; }
.tree { flex: 1; min-height: 0; margin: 0; padding: 0; list-style: none; background: #fff; border: 1px solid #a8a8a8; }
.layer { height: 27px; display: flex; align-items: center; padding-left: 33px; position: relative; white-space: nowrap; overflow: hidden; font-size: 17px; }
.layer label { display: flex; align-items: center; gap: 6px; }
.current { background: #efefef; }
.expand { position: absolute; left: 9px; }
.tree input {
  appearance: none;
  width: 21px;
  height: 21px;
  background: #fff;
  border: 2px solid #c0c0c0;
}
.tree input:checked {
  background: #fff url("data:image/svg+xml,%3Csvg xmlns='http://www.w3.org/2000/svg' viewBox='0 0 17 17'%3E%3Cpath d='M2.500 8.500l4 5.500L14 2' fill='none' stroke='%23000' stroke-width='2.400'/%3E%3C/svg%3E") center / 17px no-repeat;
}
.under { text-decoration: underline; }
.off { color: #808080; font-style: italic; }
.docktabs { flex: none; display: flex; height: 36px; align-items: flex-start; }
.dtab { height: 34px; width: 92px; background: #dcdcdc; border: 1px solid #b0b0b0; border-top: 0; border-radius: 0 0 3px 3px; }
.dtab.on { height: 36px; width: 82px; background: linear-gradient(#f0f0f0, #fbfbfb); }
.hgrip { flex: none; width: 17px; height: 2px; margin: 5px 0 2px 168px; background: repeating-linear-gradient(90deg, #bbb 0 1px, transparent 1px 3px); }
.digit { margin: 3px 0 0 10px; align-self: flex-start; }

/* map */
.map { flex: 1; min-width: 0; margin: 1px 0 4px; border: 1px solid #aaa; overflow: hidden; }
.sat { width: 100%; height: 100%; }
.soft { mix-blend-mode: soft-light; opacity: .4; }
.over { mix-blend-mode: overlay; opacity: .3; }

/* work panel */
aside.right { width: 605px; flex: none; display: flex; flex-direction: column; position: relative; }
.right .dockhead { padding: 0 2px 0 13px; }
.vgrip { position: absolute; left: 5px; top: 389px; width: 2px; height: 17px; background: repeating-linear-gradient(#bbb 0 1px, transparent 1px 3px); }
.tabbed { flex: 1; min-height: 0; display: flex; margin: 14px 18px 0 27px; }
.vtabs { width: 36px; flex: none; display: flex; flex-direction: column; align-items: flex-end; overflow: hidden; }
.vtab {
  flex: none;
  width: 34px;
  display: flex;
  align-items: center;
  justify-content: center;
  background: #e8e8e8;
  border: 1px solid #b0b0b0;
  border-right: 0;
  border-radius: 4px 0 0 4px;
}
.vtab span { writing-mode: vertical-rl; transform: rotate(180deg); font: 15px/20px "Noto Sans", sans-serif; }
.vtab.on { width: 36px; background: #fcfcfc; }
.t1 { height: 80px; }
.t2 { height: 75px; }
.t3 { height: 148px; }
.t4 { height: 46px; }
.pane { flex: 1; min-width: 0; display: flex; flex-direction: column; padding: 14px 14px 0 13px; background: #fcfcfc; border: 1px solid #a8a8a8; border-width: 1px 1px 0 0; }
.actions { display: grid; grid-template-columns: 84fr 65fr 71fr 73fr 66fr 65fr 66fr; gap: 1px; }
.act {
  height: 65px;
  display: flex;
  flex-direction: column;
  align-items: center;
  justify-content: space-between;
  padding: 2px 0 1px;
  background: linear-gradient(#fdfdfd, #ededed);
  border: 1px solid #a8a8a8;
  border-radius: 3px;
}
.act:disabled { color: #808080; border-color: #c4c4c4; }
.search { display: flex; margin-top: 9px; }
.fields { flex: 1; display: grid; grid-template-columns: 91px 1fr 68px 1fr; row-gap: 10px; align-items: center; padding-top: 1px; align-content: start; }
.mid { padding-left: 9px; }
.lensbox { display: flex; align-items: center; height: 30px; padding-left: 11px; gap: 6px; background: #efefef; border: 1px solid #a8a8a8; border-radius: 3px; min-width: 0; }
.lensbox input { width: 100%; min-width: 0; border: 0; padding: 0; background: none; color: #808080; }
.keg { grid-column: 1; grid-row: 2; }
.combo { grid-column: 2 / 5; grid-row: 2; position: relative; margin-left: 129px; }
.combo select { appearance: none; width: 100%; height: 27px; padding: 0 5px; background: linear-gradient(#fdfdfd, #efefef); border: 1px solid #a8a8a8; border-radius: 3px; }
.combo svg { position: absolute; right: 11px; top: 10px; pointer-events: none; }
.vdots { width: 2px; height: 17px; margin: 27px 2px 0; background: repeating-linear-gradient(#bbb 0 1px, transparent 1px 3px); }
.cari { width: 70px; height: 70px; padding-top: 4px; }
.gridview { flex: 1; min-height: 0; margin-top: 9px; display: flex; flex-direction: column; border: 1px solid #b0b0b0; border-bottom: 0; background: #fff; }
table { width: 100%; border-collapse: collapse; table-layout: fixed; }
th { height: 30px; padding: 0; background: linear-gradient(#fdfdfd 50%, #efefef); border-right: 1px solid #c8c8c8; border-bottom: 1px solid #b0b0b0; }
th.num { width: 16px; border-right-color: #b0b0b0; }
thead th.num { border-right: 0; }
th.rest { width: 29px; background: #efefef; border: 0; }
td { height: 45px; padding: 0 2px; background: #0078d7; color: #fff; border-right: 1px solid #c8c8c8; border-bottom: 1px solid #c8c8c8; }
td.rest { background: #fff; border: 0; }
.gutter { flex: 1; width: 16px; background: #efefef; }

/* attribute dialog */
.dialog {
  position: absolute;
  left: 266px;
  top: 112px;
  width: 533px;
  height: 416px;
  display: flex;
  flex-direction: column;
  background: #efefef;
  border-radius: 5px;
  overflow: hidden;
  box-shadow: 0 0 1px 1px #9a9a9a, 0 6px 16px rgba(0, 0, 0, .3);
}
.dtitle { height: 43px; display: flex; align-items: center; justify-content: space-between; padding: 0 1px 0 11px; background: #fff; }
.close { width: 30px; height: 30px; margin-top: 5px; display: flex; align-items: center; justify-content: center; background: #c75050; }
.attrs { display: grid; grid-template-columns: 64px 1fr; row-gap: 9px; align-items: center; padding: 26px 42px 0 26px; }
.attrs input { width: 100%; height: 30px; display: block; padding: 0 2px; background: #fff; border: 1px solid #a8a8a8; border-radius: 3px; outline: 0; }
.attrs ::placeholder { color: #808080; font-style: italic; opacity: 1; }
.attrs .focus { border-color: #3da9f5; }
.clearable { position: relative; }
.clearable svg { position: absolute; right: 11px; top: 8px; }
.textcaret { position: absolute; left: 12px; top: 6px; width: 1px; height: 19px; background: #000; }
.dbtns { display: flex; justify-content: flex-end; gap: 9px; margin: auto 13px 13px 0; }
.dbtns button { width: 80px; height: 30px; background: linear-gradient(#fefefe, #eeeeee); border: 1px solid #a8a8a8; border-radius: 3px; }
.dbtns .ok { border-color: #3da9f5; background: linear-gradient(#fefefe, #e0e6ec); }

/* callouts drawn over the window */
.notes { position: absolute; left: 0; top: 0; pointer-events: none; }
.badge {
  position: absolute;
  width: 40px;
  height: 40px;
  border-radius: 50%;
  background: #d96245;
  color: #fff;
  text-align: center;
  font: bold 28px/40px "Open Sans", sans-serif;
  box-shadow: 1px 2px 2px rgba(0, 0, 0, .3);
}
.one { left: 895px; top: 333px; }
.two { left: 673px; top: 423px; }
```
